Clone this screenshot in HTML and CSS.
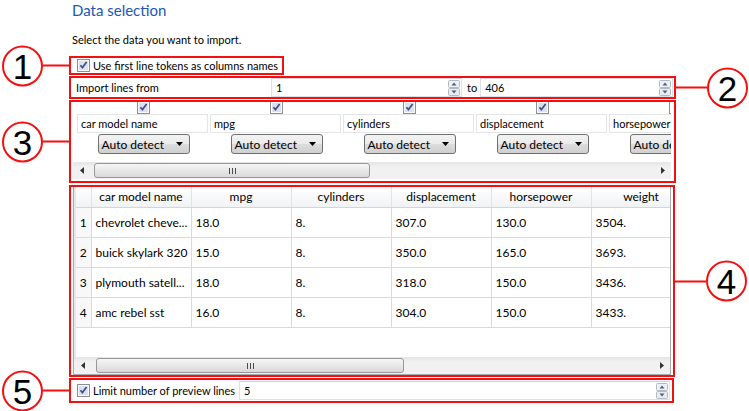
FILE: index.html
```html
<!DOCTYPE html>
<html lang="en">
<head>
<meta charset="utf-8">
<title>Data selection</title>
<link rel="stylesheet" href="styles.css">
</head>
<body>
<div class="page">
  <h1 class="title">Data selection</h1>
  <p class="intro">Select the data you want to import.</p>

  <div class="box box-1">
    <svg class="cb" width="13" height="13" viewBox="0 0 13 13"><rect x=".5" y=".5" width="12" height="12" fill="#fbfbfb" stroke="#8e8f8f"/><rect x="2" y="2" width="9" height="9" fill="#dde1e8"/><path d="M3.4 6.3l2 2.3 4.2-5.6" fill="none" stroke="#3a4f96" stroke-width="1.7"/></svg>
    <span class="label">Use first line tokens as columns names</span>
    <div class="callout callout-left"><span class="circle">1</span><span class="line"></span></div>
  </div>

  <div class="box box-2">
    <span class="label import-label">Import lines from</span>
    <div class="spin spin-from">
      <span class="spin-value">1</span>
      <svg class="spin-btns" width="12" height="16" viewBox="0 0 12 16"><rect x=".5" y=".5" width="11" height="7" rx="1" fill="#eef0f3" stroke="#b3bac5"/><rect x=".5" y="8.5" width="11" height="7" rx="1" fill="#e8ebef" stroke="#b3bac5"/><path d="M3.5 5.5h5L6 2.5z" fill="#4d6185"/><path d="M3.5 10.5h5L6 13.5z" fill="#4d6185"/></svg>
    </div>
    <span class="to">to</span>
    <div class="spin spin-to">
      <span class="spin-value">406</span>
      <svg class="spin-btns" width="12" height="16" viewBox="0 0 12 16"><rect x=".5" y=".5" width="11" height="7" rx="1" fill="#eef0f3" stroke="#b3bac5"/><rect x=".5" y="8.5" width="11" height="7" rx="1" fill="#e8ebef" stroke="#b3bac5"/><path d="M3.5 5.5h5L6 2.5z" fill="#4d6185"/><path d="M3.5 10.5h5L6 13.5z" fill="#4d6185"/></svg>
    </div>
    <div class="callout callout-right"><span class="line"></span><span class="circle">2</span></div>
  </div>

  <div class="box box-3">
    <div class="colstrip">
      <div class="col">
        <div class="col-check"><svg class="cb" width="13" height="13" viewBox="0 0 13 13"><rect x=".5" y=".5" width="12" height="12" fill="#fbfbfb" stroke="#8e8f8f"/><rect x="2" y="2" width="9" height="9" fill="#dde1e8"/><path d="M3.4 6.3l2 2.3 4.2-5.6" fill="none" stroke="#3a4f96" stroke-width="1.7"/></svg></div>
        <div class="field">car model name</div>
        <div class="combo"><span>Auto detect</span><svg width="8" height="4" viewBox="0 0 8 4"><path d="M0 0h7L3.5 4z" fill="#000"/></svg></div>
      </div>
      <div class="col">
        <div class="col-check"><svg class="cb" width="13" height="13" viewBox="0 0 13 13"><rect x=".5" y=".5" width="12" height="12" fill="#fbfbfb" stroke="#8e8f8f"/><rect x="2" y="2" width="9" height="9" fill="#dde1e8"/><path d="M3.4 6.3l2 2.3 4.2-5.6" fill="none" stroke="#3a4f96" stroke-width="1.7"/></svg></div>
        <div class="field">mpg</div>
        <div class="combo"><span>Auto detect</span><svg width="8" height="4" viewBox="0 0 8 4"><path d="M0 0h7L3.5 4z" fill="#000"/></svg></div>
      </div>
      <div class="col">
        <div class="col-check"><svg class="cb" width="13" height="13" viewBox="0 0 13 13"><rect x=".5" y=".5" width="12" height="12" fill="#fbfbfb" stroke="#8e8f8f"/><rect x="2" y="2" width="9" height="9" fill="#dde1e8"/><path d="M3.4 6.3l2 2.3 4.2-5.6" fill="none" stroke="#3a4f96" stroke-width="1.7"/></svg></div>
        <div class="field">cylinders</div>
        <div class="combo"><span>Auto detect</span><svg width="8" height="4" viewBox="0 0 8 4"><path d="M0 0h7L3.5 4z" fill="#000"/></svg></div>
      </div>
      <div class="col">
        <div class="col-check"><svg class="cb" width="13" height="13" viewBox="0 0 13 13"><rect x=".5" y=".5" width="12" height="12" fill="#fbfbfb" stroke="#8e8f8f"/><rect x="2" y="2" width="9" height="9" fill="#dde1e8"/><path d="M3.4 6.3l2 2.3 4.2-5.6" fill="none" stroke="#3a4f96" stroke-width="1.7"/></svg></div>
        <div class="field">displacement</div>
        <div class="combo"><span>Auto detect</span><svg width="8" height="4" viewBox="0 0 8 4"><path d="M0 0h7L3.5 4z" fill="#000"/></svg></div>
      </div>
      <div class="col">
        <div class="col-check"><svg class="cb" width="13" height="13" viewBox="0 0 13 13"><rect x=".5" y=".5" width="12" height="12" fill="#fbfbfb" stroke="#8e8f8f"/><rect x="2" y="2" width="9" height="9" fill="#dde1e8"/><path d="M3.4 6.3l2 2.3 4.2-5.6" fill="none" stroke="#3a4f96" stroke-width="1.7"/></svg></div>
        <div class="field">horsepower</div>
        <div class="combo"><span>Auto detect</span><svg width="8" height="4" viewBox="0 0 8 4"><path d="M0 0h7L3.5 4z" fill="#000"/></svg></div>
      </div>
    </div>
    <div class="hscroll hscroll-cols">
      <span class="sb-arrow"><svg width="4" height="7" viewBox="0 0 4 7"><path d="M4 0v7L0 3.5z" fill="#333"/></svg></span>
      <div class="sb-track"><div class="sb-thumb"><svg width="7" height="6" viewBox="0 0 7 6"><path d="M.5 0v6M3.5 0v6M6.5 0v6" stroke="#4a4a4a"/></svg></div></div>
      <span class="sb-arrow"><svg width="4" height="7" viewBox="0 0 4 7"><path d="M0 0v7L4 3.5z" fill="#333"/></svg></span>
    </div>
    <div class="callout callout-left"><span class="circle">3</span><span class="line"></span></div>
  </div>

  <div class="box box-4">
    <div class="grid-frame">
      <div class="grid-view">
        <table class="grid">
          <colgroup><col class="c-num"><col class="c-data"><col class="c-data"><col class="c-data"><col class="c-data"><col class="c-data"><col class="c-data"></colgroup>
          <thead>
            <tr><th></th><th>car model name</th><th>mpg</th><th>cylinders</th><th>displacement</th><th>horsepower</th><th>weight</th></tr>
          </thead>
          <tbody>
            <tr><td class="num">1</td><td>chevrolet cheve...</td><td>18.0</td><td>8.</td><td>307.0</td><td>130.0</td><td>3504.</td></tr>
            <tr><td class="num">2</td><td>buick skylark 320</td><td>15.0</td><td>8.</td><td>350.0</td><td>165.0</td><td>3693.</td></tr>
            <tr><td class="num">3</td><td>plymouth satell...</td><td>18.0</td><td>8.</td><td>318.0</td><td>150.0</td><td>3436.</td></tr>
            <tr><td class="num">4</td><td>amc rebel sst</td><td>16.0</td><td>8.</td><td>304.0</td><td>150.0</td><td>3433.</td></tr>
          </tbody>
        </table>
      </div>
      <div class="hscroll hscroll-grid">
        <span class="sb-arrow"><svg width="4" height="7" viewBox="0 0 4 7"><path d="M4 0v7L0 3.5z" fill="#333"/></svg></span>
        <div class="sb-track"><div class="sb-thumb"><svg width="7" height="6" viewBox="0 0 7 6"><path d="M.5 0v6M3.5 0v6M6.5 0v6" stroke="#4a4a4a"/></svg></div></div>
        <span class="sb-arrow"><svg width="4" height="7" viewBox="0 0 4 7"><path d="M0 0v7L4 3.5z" fill="#333"/></svg></span>
      </div>
    </div>
    <div class="callout callout-right"><span class="line"></span><span class="circle">4</span></div>
  </div>

  <div class="box box-5">
    <svg class="cb" width="13" height="13" viewBox="0 0 13 13"><rect x=".5" y=".5" width="12" height="12" fill="#fbfbfb" stroke="#8e8f8f"/><rect x="2" y="2" width="9" height="9" fill="#dde1e8"/><path d="M3.4 6.3l2 2.3 4.2-5.6" fill="none" stroke="#3a4f96" stroke-width="1.7"/></svg>
    <span class="label">Limit number of preview lines</span>
    <div class="spin spin-limit">
      <span class="spin-value">5</span>
      <svg class="spin-btns" width="12" height="16" viewBox="0 0 12 16"><rect x=".5" y=".5" width="11" height="7" rx="1" fill="#eef0f3" stroke="#b3bac5"/><rect x=".5" y="8.5" width="11" height="7" rx="1" fill="#e8ebef" stroke="#b3bac5"/><path d="M3.5 5.5h5L6 2.5z" fill="#4d6185"/><path d="M3.5 10.5h5L6 13.5z" fill="#4d6185"/></svg>
    </div>
    <div class="callout callout-left"><span class="circle">5</span><span class="line"></span></div>
  </div>
</div>
</body>
</html>
```

FILE: styles.css
```css
* { box-sizing: border-box; }
html, body { margin: 0; background: #fff; }
body {
  font-family: "Lato", "Liberation Sans", sans-serif;
  font-size: 11px;
  color: #000;
  width: 749px;
  height: 411px;
  overflow: hidden;
}
svg { display: block; flex: none; }

.page { padding-left: 69px; }

.title {
  margin: 0;
  padding-left: 3px;
  font-weight: normal;
  font-size: 15px;
  line-height: 20px;
  color: #2156b2;
}
.intro {
  margin: 12px 0 8px;
  padding-left: 3px;
  line-height: 16px;
}

/* annotation boxes */
.box {
  position: relative;
  border: 2px solid #f31010;
  display: flex;
  align-items: center;
}
.box-1 { width: 215px; height: 19px; margin-bottom: 1px; padding-left: 6px; gap: 3px; }
.box-2 { width: 607px; height: 23px; margin-bottom: 1px; padding-left: 5px; }
.box-3 { width: 607px; height: 83px; margin-bottom: 2px; padding: 0 3px 0 1px; flex-direction: column; align-items: stretch; }
.box-4 { width: 606px; height: 192px; margin-bottom: 1px; padding: 0 2px; align-items: stretch; }
.box-5 { width: 605px; height: 25px; padding-left: 6px; gap: 3px; }

.label { white-space: nowrap; }

/* callouts */
.callout {
  position: absolute;
  top: 50%;
  transform: translateY(-50%);
  display: flex;
  align-items: center;
}
.callout-left { right: calc(100% + 2px); }
.callout-right { left: calc(100% + 2px); }
.circle {
  width: 41px;
  height: 41px;
  border: 2px solid #f31010;
  border-radius: 50%;
  background: #fff;
  display: flex;
  align-items: center;
  justify-content: center;
  font-family: "Liberation Sans", Arial, sans-serif;
  font-size: 35px;
  line-height: 1;
  color: #000;
}
.line { width: 26px; height: 2px; background: #f31010; }
.callout-right .line { width: 31px; }

/* spin boxes */
.import-label { width: 195px; flex: none; }
.spin {
  height: 19px;
  border: 1px solid #dde1e6;
  border-top-color: #cfd3d9;
  background: #fff;
  display: flex;
  align-items: center;
  padding: 0 1px 0 4px;
}
.spin-value { flex: 1; }
.spin-from { width: 191px; }
.to { margin: 0 3px 0 5px; }
.spin-to { width: 193px; }
.spin-limit { width: 431px; margin-left: auto; margin-right: 2px; }

/* column strip */
.colstrip {
  display: flex;
  padding-left: 4px;
  margin-left: 1px;
  overflow: hidden;
  height: 52px;
  min-width: 0;
}
.col {
  flex: none;
  width: 133px;
  display: flex;
  flex-direction: column;
  align-items: center;
}
.col-check {
  height: 12px;
  overflow: hidden;
  display: flex;
  align-items: flex-end;
}
.field {
  align-self: flex-start;
  width: 131px;
  height: 19px;
  border: 1px solid #e3e5e8;
  padding-left: 3px;
  line-height: 17px;
  white-space: nowrap;
}
.combo {
  margin-top: 1px;
  width: 92px;
  height: 20px;
  flex: none;
  border: 1px solid #707070;
  border-radius: 3px;
  background: linear-gradient(#f3f3f3 0%, #ebebeb 48%, #dddddd 52%, #d0d0d0 100%);
  display: flex;
  align-items: center;
  justify-content: space-between;
  padding: 0 5px 0 3px;
  white-space: nowrap;
  font-size: 12px;
}

/* scrollbars */
.hscroll {
  height: 17px;
  display: flex;
  background: linear-gradient(#e5e5e5, #f1f1f1 30%, #f1f1f1);
  flex: none;
}
.hscroll-cols { margin-top: 8px; margin-left: 1px; }
.sb-arrow {
  width: 17px;
  display: flex;
  align-items: center;
  justify-content: center;
  flex: none;
}
.sb-track { flex: 1; display: flex; align-items: center; }
.sb-thumb {
  height: 15px;
  border: 1px solid #979797;
  border-radius: 3px;
  background: linear-gradient(#f6f6f6, #e8e8e8 50%, #d9d9d9);
  display: flex;
  align-items: center;
  justify-content: center;
  margin-left: 4px;
}
.hscroll-cols .sb-thumb { width: 276px; }
.hscroll-grid .sb-thumb { width: 308px; margin-left: 5px; }

/* grid */
.grid-frame {
  flex: 1;
  min-width: 0;
  display: flex;
  flex-direction: column;
  border: 1px solid #a9abae;
  border-top: 0;
  background: #fff;
}
.grid-view { flex: 1; min-width: 0; overflow: hidden; border-left: 2px solid #e8e8e8; }
.grid {
  border-collapse: collapse;
  table-layout: fixed;
  width: 615px;
  white-space: nowrap;
}
.c-num { width: 15px; }
.c-data { width: 100px; }
.grid th {
  height: 20px;
  padding: 0;
  font-weight: normal;
  font-size: 12px;
  text-align: center;
  background: linear-gradient(#ffffff, #f1f2f4);
  border-right: 1px solid #e2e3e5;
  border-bottom: 1px solid #d5d5d5;
  overflow: hidden;
}
.grid td {
  height: 30px;
  padding: 0 0 0 4px;
  font-size: 12px;
  border-right: 1px solid #dadada;
  border-bottom: 1px solid #dadada;
  overflow: hidden;
}
.grid td.num {
  padding: 0;
  text-align: center;
  background: #f8f8f8;
}
```
